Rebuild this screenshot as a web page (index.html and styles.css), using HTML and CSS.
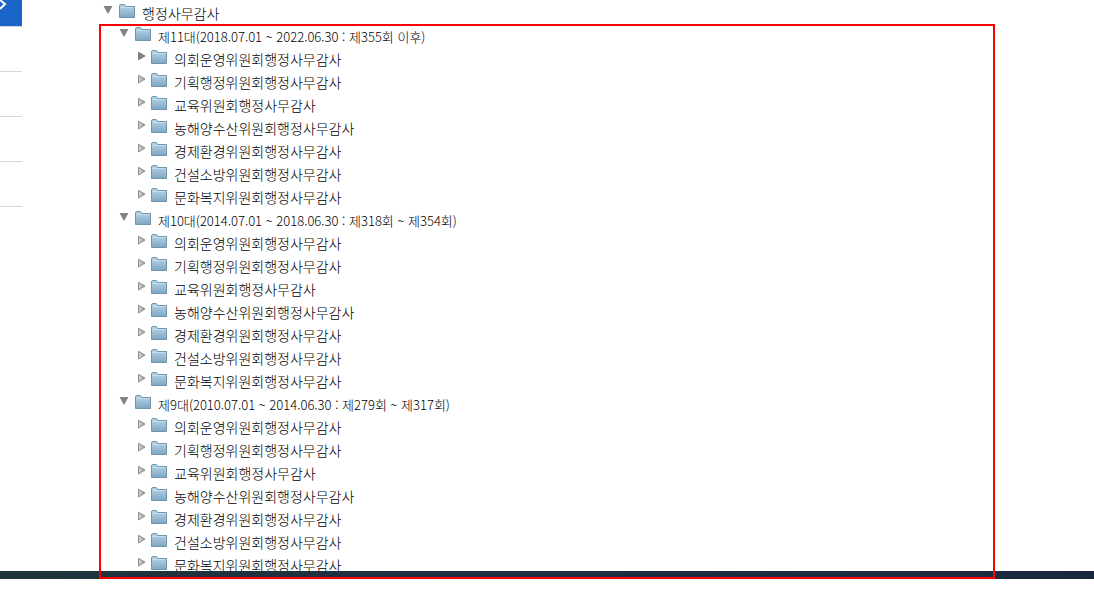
FILE: index.html
```html
<!DOCTYPE html>
<html lang="ko">
<head>
<meta charset="utf-8">
<title>행정사무감사</title>
<link rel="stylesheet" href="styles.css">
</head>
<body>
<svg class="defs" aria-hidden="true">
  <linearGradient id="blue" x1="0" y1="0" x2="0" y2="1"><stop offset="0" stop-color="#b9d6e8"/><stop offset="1" stop-color="#7ea7c3"/></linearGradient>
  <linearGradient id="grey" x1="0" y1="0" x2="1" y2="0"><stop offset="0" stop-color="#dcdcdc"/><stop offset="1" stop-color="#909090"/></linearGradient>
  <symbol id="folder" viewBox="0 0 16 14"><path d="M.5 13.500V2Q.5 .5 2 .5H5Q6 .5 6.500 2.500H15.500V13.500Z" fill="url(#blue)" stroke="#6e95ad"/><path d="M1.500 3.500H14.500" stroke="#c6deec"/></symbol>
  <symbol id="open" viewBox="0 0 10 10"><path d="M.5 1H9.500L5 9Z" fill="#828282"/></symbol>
  <symbol id="solid" viewBox="0 0 10 10"><path d="M1 .5V9.500L9 5Z" fill="#828282"/></symbol>
  <symbol id="closed" viewBox="0 0 10 10"><path d="M1.500 1.300V9L8 5Z" fill="url(#grey)" stroke="#8c8c8c"/></symbol>
</svg>
<div class="page">
  <nav class="side" aria-label="메뉴">
    <button class="side-head" aria-label="메뉴 열기"><svg class="chevron" viewBox="0 0 8 12"><path d="M0 0L5 4L0 9" fill="none" stroke="#fff" stroke-width="2"/></svg></button>
    <div class="side-item"></div><div class="side-item"></div><div class="side-item"></div><div class="side-item"></div>
  </nav>
  <main class="content">
    <ul class="tree" id="tree"></ul>
    <div class="frame"></div>
  </main>
</div>
<footer class="footer"></footer>
<script src="tree.js"></script>
</body>
</html>
```
FILE: styles.css
```css
* { box-sizing: border-box; }
body { margin: 0; background: #fff; color: #000; font-family: "Noto Sans CJK KR", sans-serif; font-size: 14px; font-weight: 300; }
button { border: 0; padding: 0; background: none; }
.defs { position: absolute; width: 0; height: 0; }
.page { display: flex; }
.side { width: 22px; flex: none; }
.side-head { display: block; width: 100%; height: 27px; background: #1b64c8; border-bottom: 1px solid #d7d7d7; text-align: left; }
.chevron { display: block; width: 8px; height: 12px; margin-bottom: 14px; }
.side-item { height: 45px; border-bottom: 1px solid #d7d7d7; }
.content { position: relative; flex: 1; margin: 0 99px 0 77px; padding: 2px 0 0 4px; }
.tree, .branch { list-style: none; margin: 0; padding: 0; }
.branch { padding-left: 16px; }
.row { display: flex; align-items: flex-start; height: 23px; }
.twisty { width: 10px; height: 10px; margin-top: 3px; }
.arrow { display: block; width: 10px; height: 10px; }
.leaf .twisty { margin-left: 2px; }
.leaf .folder { margin-left: 4px; }
.folder { width: 16px; height: 14px; margin: 2px 7px 0 6px; }
.label { color: inherit; text-decoration: none; white-space: nowrap; line-height: 23px; }
.term .label { font-size: 13px; }
.frame { position: absolute; inset: 24px 0 -2px; border: 2px solid #f00; z-index: 2; pointer-events: none; }
.footer { position: relative; height: 8px; margin-top: -6px; background: linear-gradient(90deg, #20343e, #1b2940); }
```
FILE: tree.js
```js
const committees = ["의회운영위원회", "기획행정위원회", "교육위원회", "농해양수산위원회", "경제환경위원회", "건설소방위원회", "문화복지위원회"];
const terms = [
  "제11대(2018.07.01 ~ 2022.06.30 : 제355회 이후)",
  "제10대(2014.07.01 ~ 2018.06.30 : 제318회 ~ 제354회)",
  "제9대(2010.07.01 ~ 2014.06.30 : 제279회 ~ 제317회)"
];
const row = (kind, arrow, text) => `<div class="row ${kind}"><button class="twisty" aria-label="${text} 펼치기"><svg class="arrow"><use href="#${arrow}"/></svg></button><svg class="folder"><use href="#folder"/></svg><a class="label" href="#">${text}</a></div>`;
document.getElementById("tree").innerHTML = `<li>${row("root", "open", "행정사무감사")}<ul class="branch">${terms.map((term, t) =>
  `<li>${row("term", "open", term)}<ul class="branch">${committees.map((name, i) =>
    `<li>${row("leaf", t + i === 0 ? "solid" : "closed", name + "행정사무감사")}</li>`).join("")}</ul></li>`).join("")}</ul></li>`;
```
